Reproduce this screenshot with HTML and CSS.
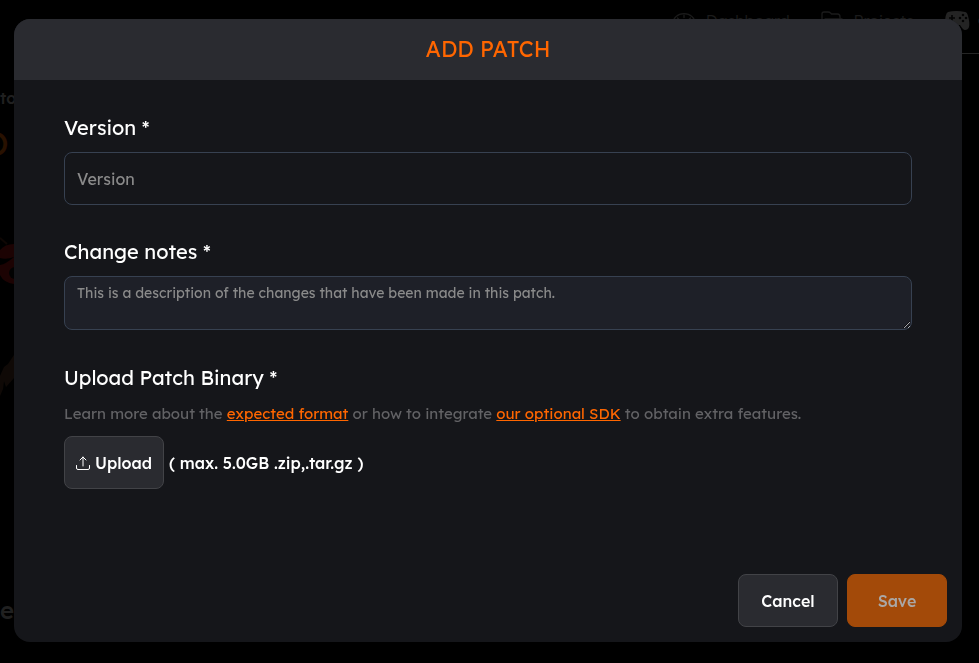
FILE: index.html
```html
<!DOCTYPE html>
<html lang="en">
<head>
  <meta charset="UTF-8">
  <meta name="viewport" content="width=device-width, initial-scale=1.0">
  <title>Add Patch</title>
  <link rel="stylesheet" href="styles.css">
</head>
<body>
  <div class="page" aria-hidden="true">
    <div class="navbar">
      <span class="nav-item">
        <svg class="nav-icon" width="24" height="24" viewBox="0 0 24 24" fill="none" stroke="currentColor" stroke-width="1.3" stroke-linecap="round">
          <path d="M4.500 22a11.200 10 0 1 1 15 0z"/>
          <path d="M12 6v2.500M5.500 9l1.600 1.600M18.500 9l-6 6M3.500 14h2M18.500 14h2"/>
        </svg>
        Dashboard
      </span>
      <span class="nav-item">
        <svg class="nav-icon" width="24" height="24" viewBox="0 0 24 24" fill="none" stroke="currentColor" stroke-width="1.3" stroke-linejoin="round">
          <path d="M2 20V5q0-2 2-2h4q1.500 0 2.500 1l1 1h6q2.500 0 2.500 3v2M2 20l3-10h17l-3 10z"/>
        </svg>
        Projects
      </span>
      <svg class="gamepad" width="26" height="22" viewBox="0 0 26 22">
        <path fill="#b4b4b4" d="M4 2Q12 0 21 2q2 0 3 4 2 7 1 11-1 3-4 3-2 0-5-5h-6q-3 5-5 5-4 0-4-5Q1 3 4 2z"/>
        <path stroke="#111" stroke-width="1.600" d="M8 5v6M5 8h6"/>
        <g fill="#111">
          <circle cx="19" cy="5" r="1.300"/>
          <circle cx="16" cy="8" r="1.300"/>
          <circle cx="22" cy="8" r="1.300"/>
          <circle cx="19" cy="11" r="1.300"/>
        </g>
      </svg>
      <span class="nav-dot"></span>
    </div>
    <div class="page-crumb">to</div>
    <div class="page-title">O</div>
    <svg class="page-art" width="80" height="348" viewBox="0 0 80 348">
      <path fill="#8c1010" d="M0 54q5-6 14-6h20v40H14Q4 87 0 79V69q6-1 14-8Q6 64 0 62z"/>
      <circle cx="15" cy="77" r="6" fill="#0d0a0a"/>
      <path stroke="#4a2416" stroke-width="2" d="M0 42l7 6"/>
      <path fill="#4d3020" d="M14 159l-6 9-4 3-4 9v20l3-7 1-8 2 6 8-9z"/>
    </svg>
    <div class="page-footer">e</div>
  </div>

  <div class="overlay">
    <form class="modal" role="dialog" aria-labelledby="modal-title">
      <div class="modal-header">
        <h1 class="modal-title" id="modal-title">ADD PATCH</h1>
      </div>

      <div class="modal-body">
        <div class="form-group">
          <label class="form-label" for="version">Version *</label>
          <input class="form-control" type="text" id="version" placeholder="Version">
        </div>

        <div class="form-group">
          <label class="form-label" for="notes">Change notes *</label>
          <textarea class="form-control form-textarea" id="notes" placeholder="This is a description of the changes that have been made in this patch."></textarea>
        </div>

        <div class="form-group">
          <h2 class="form-label" id="upload-label">Upload Patch Binary *</h2>
          <p class="form-help">Learn more about the <a href="#">expected format</a> or how to integrate <a href="#">our optional SDK</a> to obtain extra features.</p>
          <div class="upload-row">
            <button class="btn btn-dark" type="button" aria-describedby="upload-label">
              <svg width="14" height="14" viewBox="0 0 14 14" fill="none" stroke="currentColor" stroke-linecap="round" stroke-linejoin="round">
                <path d="M.5 9.500v2.500q0 1.500 1.500 1.500h10q1.500 0 1.500-1.500V9.500M7 10V1M4 4l3-3 3 3"/>
              </svg>
              Upload
            </button>
            <span class="upload-hint">( max. 5.0GB .zip,.tar.gz )</span>
          </div>
        </div>
      </div>

      <div class="modal-footer">
        <button class="btn btn-dark" type="button">Cancel</button>
        <button class="btn btn-save" type="submit" disabled>Save</button>
      </div>
    </form>
  </div>
</body>
</html>
```

FILE: styles.css
```css
* {
  box-sizing: border-box;
}

body {
  margin: 0;
  background-color: #030303;
  color: #fff;
  font-family: Lexend, Inter, sans-serif;
  font-size: 16px;
}

h1, h2, p {
  margin: 0;
}

/* page behind the dialog */
.page {
  height: 100vh;
  overflow: hidden;
  color: #a0a0a0;
}

.navbar {
  display: flex;
  justify-content: flex-end;
  align-items: center;
  height: 54px;
  margin-left: 20px;
  padding-bottom: 12px;
  border-bottom: 1px solid #bbb;
}

.nav-item {
  display: flex;
  align-items: center;
  gap: 10px;
  margin-right: 30px;
  color: #858585;
  font-weight: 300;
}

.nav-dot {
  width: 6px;
  height: 6px;
  margin-left: 8px;
  margin-right: -5px;
  border-radius: 50%;
  background-color: #0b5d9c;
}

.page-crumb {
  padding-top: 32px;
  font-size: 16px;
  font-weight: 500;
  line-height: 24px;
}

.page-title {
  margin-left: -18px;
  padding-top: 16px;
  color: #c85500;
  font-size: 34px;
  line-height: 36px;
}

.page-art {
  display: block;
  margin-top: 34px;
}

.page-footer {
  padding-top: 50px;
  font-size: 24px;
  font-weight: 500;
  line-height: 32px;
}

/* dialog */
.overlay {
  position: fixed;
  inset: 0;
  display: flex;
  padding: 19px 17px 21px 14px;
  background-color: rgba(0, 0, 0, 0.8);
}

.modal {
  flex: 1;
  display: flex;
  flex-direction: column;
  overflow: hidden;
  border-radius: 16px;
  background-color: #15161a;
}

.modal-header {
  padding: 16px;
  background-color: #2a2b30;
  text-align: center;
}

.modal-title {
  color: #ff6600;
  font-size: 22px;
  font-weight: 400;
  line-height: 29px;
}

.modal-body {
  display: flex;
  flex-direction: column;
  gap: 33px;
  padding: 34px 50px;
}

.form-group {
  display: flex;
  flex-direction: column;
  gap: 10px;
}

.form-label {
  font-size: 20px;
  font-weight: 400;
  line-height: 28px;
}

.form-control {
  width: 100%;
  height: 53px;
  padding: 0 12px;
  border: 1px solid #374151;
  border-radius: 8px;
  background-color: #15161a;
  color: #fff;
  font-family: inherit;
  font-size: 16px;
}

.form-control::placeholder {
  color: #8a8a8a;
}

.form-textarea {
  height: 54px;
  margin-bottom: 1px;
  padding: 6px 12px;
  background-color: #1e2028;
  font-size: 14px;
  line-height: 20px;
  resize: vertical;
}

.form-help {
  color: #626265;
  font-size: 15px;
  font-weight: 400;
  line-height: 24px;
}

.form-help a {
  color: #ff6600;
}

.upload-row {
  display: flex;
  align-items: center;
  gap: 5px;
}

.upload-hint {
  font-weight: 500;
}

.btn {
  display: inline-flex;
  justify-content: center;
  align-items: center;
  gap: 5px;
  min-width: 100px;
  height: 53px;
  padding: 0 11px;
  border: 1px solid #424347;
  border-radius: 8px;
  font-family: inherit;
  font-size: 16px;
  font-weight: 500;
  cursor: pointer;
}

.btn-dark {
  background-color: #2a2b30;
  color: #fff;
}

.btn-save {
  border-color: #a34a09;
  background-color: #a34a09;
  color: #aaa7a5;
  cursor: default;
}

.modal-footer {
  display: flex;
  justify-content: flex-end;
  gap: 9px;
  margin-top: auto;
  padding: 15px;
}
```
